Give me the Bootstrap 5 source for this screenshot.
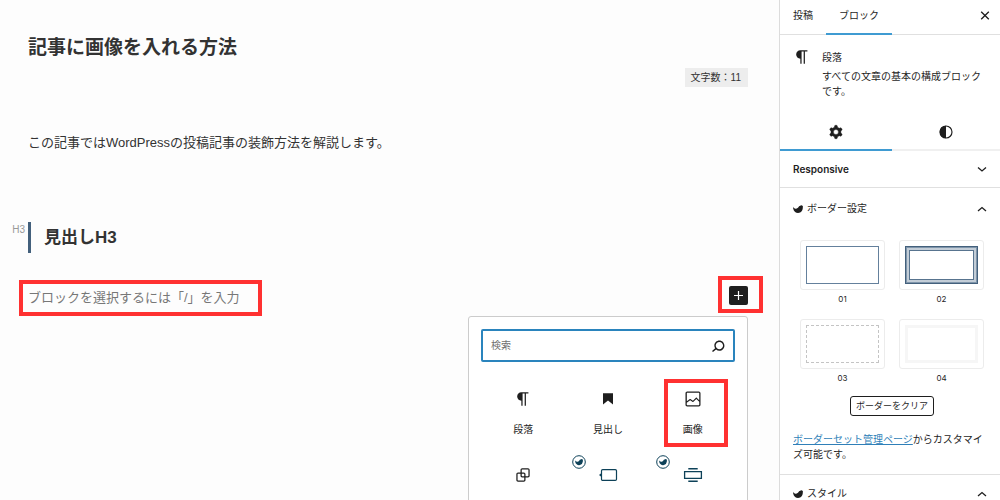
<!DOCTYPE html>
<html lang="ja">
<head>
<meta charset="utf-8">
<meta name="viewport" content="width=device-width, initial-scale=1">
<title>記事に画像を入れる方法</title>
<link href="https://cdn.jsdelivr.net/npm/bootstrap@5.3.0/dist/css/bootstrap.min.css" rel="stylesheet">
<style>
  body { font-family: "Liberation Sans", "Noto Sans CJK JP", sans-serif; font-size: 13px; line-height: 20px; color: #333; background: #fdfdfd; }
  button { background: none; border: 0; padding: 0; color: inherit; }
  svg { display: block; flex: none; fill: currentColor; }
  .ico { width: 20px; height: 20px; }
  .line { fill: none; stroke: currentColor; }

  /* editor canvas */
  .canvas { padding: 32px 31px 0 28px; }
  .post-title { font-size: 19px; line-height: 32px; font-weight: 700; }
  .char-count { font-size: 10px; line-height: 19px; background: #ededed; padding: 0 7px 0 6px; margin-top: 4px; }
  .intro { margin: 46px 0 69px; }
  .heading-block { border-left: 3px solid #43607c; padding-left: 13px; }
  .heading-block h3 { font-size: 17px; line-height: 31px; font-weight: 700; }
  .tag-label { right: 100%; top: 0; font-size: 10px; line-height: 16px; color: #999; margin-right: 6px; }
  .prompt-row { margin-top: 33px; height: 30px; }
  .prompt-box { flex: 0 1 214px; }
  .prompt-input { border: 0; background: none; padding: 0; width: 100%; outline: 0; line-height: 24px; display: block; }
  .prompt-input::placeholder { color: #777; opacity: 1; }
  .add-btn { width: 19px; height: 19px; background: #1e1e1e; color: #fff; border-radius: 2px; }
  .marker { position: absolute; border: 4px solid #ff3131; pointer-events: none; }
  .marker-input { inset: -6px -20px -6px -9px; }
  .marker-add { inset: -10px -15px -8px -11px; }
  .marker-image { inset: 2px 7px 6px 14px; }

  /* block inserter */
  .inserter { width: 280px; background: #fff; border: 1px solid #ccc; border-radius: 3px; padding: 12px; color: #1e1e1e; font-size: 10px; }
  .search-box { border: 2px solid #2a84bd; border-radius: 2px; height: 33px; padding: 0 4px 0 8px; }
  .search-box input { border: 0; outline: 0; background: none; padding: 0; min-width: 0; }
  .search-box input::placeholder { color: #707070; opacity: 1; }
  .block-grid { display: grid; grid-template-columns: repeat(3, 1fr); margin-top: 15px; }
  .block-item { padding: 12px 0 15px; gap: 13px; line-height: 16px; }
  .teal { color: #0d4158; }
  .brand-badge { left: 6px; top: 2px; width: 14px; height: 14px; }

  /* settings sidebar */
  .settings { width: 221px; background: #fff; border-left: 1px solid #dcdcdc; color: #1e1e1e; font-family: Inter, "Noto Sans CJK JP", sans-serif; font-size: 10px; line-height: 15px; }
  .tabs-top { height: 35px; border-bottom: 1px solid #e0e0e0; padding-right: 10px; }
  .tabs-top button { padding: 0 13px 2px; margin-bottom: -1px; line-height: 31px; border-bottom: 2px solid transparent; }
  .tabs-top .active, .tabs-sub .active { border-bottom-color: #3f9bd2; }
  .block-card { padding: 15px 12px 15px 12px; gap: 10px; }
  .block-card .ico { margin-top: -3px; }
  .tabs-sub button { height: 37px; border-bottom: 2px solid #f0f0f0; }
  .tabs-sub .active { flex: 0 0 112px; }
  .panel-head { padding: 0 12px 0 13px; height: 37px; width: 100%; }
  .panel-line { border-bottom: 1px solid #e0e0e0; }
  .panel-head svg:last-child { width: 12px; height: 12px; }
  .panel-body { padding-top: 2px; }
  .bird { width: 10px; height: 10px; margin-right: 4px; }
  .border-grid { display: grid; grid-template-columns: 1fr 1fr; gap: 10px 14px; padding: 13px 16px 0 20px; font-size: 8px; line-height: 19px; }
  .frame-card { height: 50px; border: 1px solid #ececec; border-radius: 3px; padding: 5px; }
  .frame-card span { display: block; height: 38px; }
  .b01 { border: 1px solid #64809c; }
  .b02 { border: 1px solid #43607c; outline: 1px solid #58748f; outline-offset: -5px; background: #fff; box-shadow: inset 0 0 0 1px #7f95aa, inset 0 0 0 3px #c3cdd7; }
  .b03 { border: 1px dashed #c4c4c4; }
  .b04 { border: 3px solid #f6f6f6; }
  .clear-btn { border: 1px solid #1e1e1e; border-radius: 3px; font-size: 9px; line-height: 18px; padding: 0 5px; }
  .note { padding: 16px 12px 12px 13px; }
  .note a { color: #2f7fb8; }
</style>
</head>
<body>
<svg class="d-none">
  <symbol id="i-par" viewBox="0 0 24 24"><path d="m9.996 14v-.225l.004 0v6.225h1.5v-14.500h2.500v14.500h1.500v-14.500h3v-1.500h-8.504c-2.761 0-5 2.239-5 5 0 2.761 2.239 5 5 5z"/></symbol>
  <symbol id="i-bird" viewBox="0 0 12 12"><path d="M0 3.200 Q.8 4.900 2.300 5.300 Q4.500 6.100 6 4.600 Q7 2 9.300 1.700 Q10.800 1.400 11.900 2.600 L11.700 5.500 Q11.200 9.500 7.500 10.600 Q4.500 11.200 2.500 9.500 Q.600 8 .400 6.100 Q0 4.800 0 3.200Z"/></symbol>
  <symbol id="i-brand" viewBox="0 0 14 14"><circle cx="7" cy="7" r="6.300" fill="#fff" stroke="currentColor"/><use href="#i-bird" x="3" y="3" width="8" height="8"/></symbol>
  <symbol id="i-up" viewBox="0 0 12 12"><path class="line" stroke-width="1.300" d="M2 8 6 4.500 10 8"/></symbol>
  <symbol id="i-down" viewBox="0 0 12 12"><path class="line" stroke-width="1.300" d="M2 4.500 6 8 10 4.500"/></symbol>
</svg>

<div class="d-flex vh-100 overflow-hidden">
  <main class="canvas flex-grow-1 overflow-hidden">
    <h1 class="post-title mb-0">記事に画像を入れる方法</h1>
    <div class="d-flex justify-content-end"><span class="char-count">文字数：11</span></div>
    <p class="intro">この記事ではWordPressの投稿記事の装飾方法を解説します。</p>
    <div class="heading-block position-relative">
      <span class="tag-label position-absolute">H3</span>
      <h3 class="mb-0">見出しH3</h3>
    </div>
    <div class="prompt-row d-flex justify-content-between align-items-start">
      <div class="prompt-box position-relative">
        <input class="prompt-input" type="text" aria-label="ブロック" placeholder="ブロックを選択するには「/」を入力">
        <span class="marker marker-input"></span>
      </div>
      <button class="add-btn position-relative" type="button" aria-label="ブロックを追加">
        <svg class="line" width="19" height="19" viewBox="0 0 19 19"><path d="M9.500 5v9M5 9.500h9" stroke-width="1.200"/></svg>
        <span class="marker marker-add"></span>
      </button>
    </div>
    <div class="inserter ms-auto">
      <div class="search-box d-flex align-items-center">
        <input class="flex-grow-1" type="text" placeholder="検索" aria-label="検索">
        <svg width="22" height="22" viewBox="0 0 24 24"><path d="M13.500 6C10.500 6 8 8.500 8 11.500c0 1.100.3 2.100.9 3l-3.400 3 1 1.100 3.400-2.900c1 .9 2.200 1.400 3.600 1.400 3 0 5.500-2.500 5.500-5.500C19 8.500 16.500 6 13.500 6zm0 9.500c-2.200 0-4-1.800-4-4s1.800-4 4-4 4 1.800 4 4-1.800 4-4 4z"/></svg>
      </div>
      <div class="block-grid">
        <button class="block-item d-flex flex-column align-items-center" type="button"><svg class="ico"><use href="#i-par"/></svg>段落</button>
        <button class="block-item d-flex flex-column align-items-center" type="button"><svg class="ico" viewBox="0 0 24 24"><path d="M6 5v13.600l6-4.700 6 4.700V5z"/></svg>見出し</button>
        <button class="block-item d-flex flex-column align-items-center position-relative" type="button"><svg class="ico" viewBox="0 0 24 24"><path d="M19 3H5c-1.100 0-2 .9-2 2v14c0 1.100.9 2 2 2h14c1.100 0 2-.9 2-2V5c0-1.100-.9-2-2-2zM5 4.500h14c.3 0 .5.2.5.5v8.400l-3-2.900c-.3-.3-.8-.3-1 0L11.900 14 9 12c-.3-.2-.6-.2-.8 0l-3.600 2.600V5c-.1-.3.1-.5.4-.5zm14 15H5c-.3 0-.5-.2-.5-.5v-2.400l4.100-3 3 1.900c.3.2.7.2.9-.1L16 12l3.500 3.400V19c0 .3-.2.5-.5.5z"/></svg>画像<span class="marker marker-image"></span></button>
        <button class="block-item d-flex flex-column align-items-center" type="button"><svg class="ico" viewBox="0 0 24 24"><path d="M18 4h-7c-1.100 0-2 .9-2 2v3H6c-1.100 0-2 .9-2 2v7c0 1.100.9 2 2 2h7c1.100 0 2-.9 2-2v-3h3c1.100 0 2-.9 2-2V6c0-1.100-.9-2-2-2zm-4.500 14c0 .3-.2.5-.5.5H6c-.3 0-.5-.2-.5-.5v-7c0-.3.2-.5.5-.5h3V13c0 1.100.9 2 2 2h2.500v3zm0-4.500H11c-.3 0-.5-.2-.5-.5v-2.500H13c.3 0 .5.2.5.5v2.500zm5-.5c0 .3-.2.5-.5.5h-3V11c0-1.100-.9-2-2-2h-2.500V6c0-.3.2-.5.5-.5h7c.3 0 .5.2.5.5v7z"/></svg>グループ</button>
        <button class="block-item d-flex flex-column align-items-center position-relative" type="button"><svg class="brand-badge teal position-absolute"><use href="#i-brand"/></svg><svg class="ico teal" viewBox="0 0 20 20"><rect class="line" x="3.500" y="4.600" width="15" height="10.800" rx="1.200" stroke-width="1.200"/><path d="M3.500 8 1 10l2.500 2z"/></svg>ふきだし</button>
        <button class="block-item d-flex flex-column align-items-center position-relative" type="button"><svg class="brand-badge teal position-absolute"><use href="#i-brand"/></svg><svg class="ico teal" viewBox="0 0 20 20"><path class="line" stroke-width="1.300" d="M1.600 6.600h16.800v6.800H1.600z"/><path d="M5.300 3h9.400v1.600H5.300zM5.300 15.400h9.400V17H5.300z"/></svg>フルワイド</button>
      </div>
    </div>
  </main>

  <aside class="settings flex-shrink-0">
    <div class="tabs-top d-flex align-items-end">
      <button type="button">投稿</button>
      <button class="active" type="button">ブロック</button>
      <button class="ms-auto px-0" type="button" aria-label="閉じる"><svg class="line" width="10" height="31" viewBox="0 0 10 31"><path stroke-width="1.300" d="m1.200 11.700 7.600 7.600m0-7.600-7.600 7.600"/></svg></button>
    </div>
    <div class="block-card d-flex">
      <svg class="ico" viewBox="0 0 24 24"><use href="#i-par"/></svg>
      <div>
        <div class="mb-1">段落</div>
        <div>すべての文章の基本の構成ブロックです。</div>
      </div>
    </div>
    <div class="tabs-sub d-flex">
      <button class="active d-flex justify-content-center align-items-center" type="button" aria-label="設定"><svg class="ico" viewBox="0 0 24 24"><path fill-rule="evenodd" stroke="currentColor" stroke-width=".5" d="M10.289 4.836A1 1 0 0111.275 4h1.306a1 1 0 01.987.836l.244 1.466c.787.26 1.503.679 2.108 1.218l1.393-.522a1 1 0 011.216.437l.653 1.130a1 1 0 01-.23 1.273l-1.148.944a6.025 6.025 0 010 2.435l1.149.946a1 1 0 01.23 1.272l-.653 1.130a1 1 0 01-1.216.437l-1.394-.522c-.605.54-1.320.958-2.108 1.218l-.244 1.466a1 1 0 01-.987.836h-1.306a1 1 0 01-.986-.836l-.244-1.466a5.995 5.995 0 01-2.108-1.218l-1.394.522a1 1 0 01-1.217-.436l-.653-1.131a1 1 0 01.23-1.272l1.149-.946a6.026 6.026 0 010-2.435l-1.148-.944a1 1 0 01-.23-1.272l.653-1.131a1 1 0 011.217-.437l1.393.522a5.994 5.994 0 012.108-1.218l.244-1.466zM14.929 12a3 3 0 11-6 0 3 3 0 016 0z"/></svg></button>
      <button class="flex-grow-1 d-flex justify-content-center align-items-center" type="button" aria-label="スタイル"><svg class="ico" viewBox="0 0 24 24"><circle class="line" cx="12" cy="12" r="7.200" stroke-width="1.400"/><path d="M12 4.500a7.500 7.500 0 0 0 0 15z"/></svg></button>
    </div>
    <button class="panel-head panel-line d-flex align-items-center fw-semibold" type="button">Responsive<svg class="ms-auto"><use href="#i-down"/></svg></button>
    <section class="panel-body panel-line">
      <button class="panel-head d-flex align-items-center" type="button"><svg class="bird"><use href="#i-bird"/></svg>ボーダー設定<svg class="ms-auto"><use href="#i-up"/></svg></button>
      <div class="border-grid">
        <button type="button"><span class="frame-card d-block"><span class="b01"></span></span>01</button>
        <button type="button"><span class="frame-card d-block"><span class="b02"></span></span>02</button>
        <button type="button"><span class="frame-card d-block"><span class="b03"></span></span>03</button>
        <button type="button"><span class="frame-card d-block"><span class="b04"></span></span>04</button>
      </div>
      <div class="text-center pt-2 ps-1"><button class="clear-btn" type="button">ボーダーをクリア</button></div>
      <p class="note mb-0"><a href="#">ボーダーセット管理ページ</a>からカスタマイズ可能です。</p>
    </section>
    <button class="panel-head d-flex align-items-center" type="button"><svg class="bird"><use href="#i-bird"/></svg>スタイル<svg class="ms-auto"><use href="#i-up"/></svg></button>
  </aside>
</div>
<script src="https://cdn.jsdelivr.net/npm/bootstrap@5.3.0/dist/js/bootstrap.bundle.min.js"></script>
</body>
</html>
